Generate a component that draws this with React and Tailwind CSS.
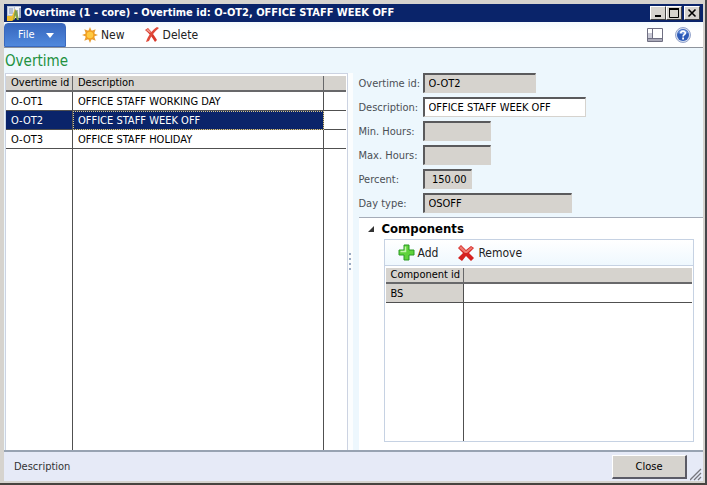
import React from 'react';

const rows = [
  { id: 'O-OT1', description: 'OFFICE STAFF WORKING DAY' },
  { id: 'O-OT2', description: 'OFFICE STAFF WEEK OFF', selected: true },
  { id: 'O-OT3', description: 'OFFICE STAFF HOLIDAY' },
];

const fields = [
  { id: 'overtimeId', label: 'Overtime id:', value: 'O-OT2', look: 'w-[113px] bg-[#d6d3ce]', readOnly: true },
  { id: 'description', label: 'Description:', value: 'OFFICE STAFF WEEK OFF', look: 'w-[163px] bg-white' },
  { id: 'minHours', label: 'Min. Hours:', value: '', look: 'w-[68px] bg-[#d6d3ce]', readOnly: true },
  { id: 'maxHours', label: 'Max. Hours:', value: '', look: 'w-[68px] bg-[#d6d3ce]', readOnly: true },
  { id: 'percent', label: 'Percent:', value: '150.00', look: 'w-[49px] bg-[#d6d3ce] text-right', readOnly: true },
  { id: 'dayType', label: 'Day type:', value: 'OSOFF', look: 'w-[149px] bg-[#d6d3ce]', readOnly: true },
];

function AppIcon() {
  return (
    <svg width="16" height="16" viewBox="0 0 16 16">
      <path d="M1 1h14v12H1z" fill="#b9c3d6" />
      <path d="M2 2h6v8H2z" fill="#e3e8f1" />
      <path d="M3 4h4M3 6h4M3 8h4" stroke="#8695b3" />
      <path d="M9 2h6v11H9z" fill="#f2f4f8" />
      <path d="M11 13V5m3 8V3" stroke="#8b97ad" strokeWidth="1.500" />
      <path d="M1 11h5l3-7 1 1-1 9-3 2H1z" fill="#f0bd2c" />
      <path d="M9 5l2 1 2 9h-2l-2-5-1 5H7z" fill="#7fa04c" />
    </svg>
  );
}

function SunIcon() {
  return (
    <svg width="16" height="16" viewBox="0 0 16 16">
      <path
        d="M8 0l1.600 3.800L13.700 2.300l-1.500 4.100L16 8l-3.800 1.600 1.500 4.100-4.100-1.500L8 16l-1.600-3.800-4.100 1.500 1.500-4.100L0 8l3.800-1.600-1.500-4.100 4.100 1.500z"
        fill="#e8a035"
      />
      <circle cx="8" cy="8" r="4.500" fill="#f39c1c" />
      <circle cx="8" cy="8" r="3.300" fill="#ffc940" />
    </svg>
  );
}

function DeleteIcon() {
  return (
    <svg width="14" height="16" viewBox="0 0 14 16">
      <path d="M0 3l3-2c3 3 6 7 9 12l-2 2C7 10 4 6 0 3z" fill="#d8382b" />
      <path d="M14 1C9 5 6 9 4 14l-3 1C3 9 7 3 12 0z" fill="#e0493a" />
      <path d="M1 3l2-1 3 3-1 1z" fill="#f09a8f" />
    </svg>
  );
}

function PlusIcon() {
  return (
    <svg width="17" height="17" viewBox="0 0 17 17">
      <path d="M6 1h5v5h5v5h-5v5H6v-5H1V6h5z" fill="#5fd33b" stroke="#2b9a24" strokeLinejoin="round" />
      <path d="M7.500 2.500v5h-5" fill="none" stroke="#c4f5ac" strokeWidth="1.500" />
    </svg>
  );
}

function CrossIcon() {
  return (
    <svg width="16" height="16" viewBox="0 0 16 16">
      <path d="M0 3l3-3 5 5 5-4 3 2-5 5 5 5-3 3-5-5-4 5-4-3 5-5z" fill="#d4201f" />
      <path d="M1 3l2-2 5 5 5-4 2 1-6 5H7z" fill="#ee7a70" />
    </svg>
  );
}

function LayoutIcon() {
  return (
    <svg width="16" height="14" viewBox="0 0 16 14">
      <path d="M.5.500h15v13H.500z" fill="#fff" stroke="#6f6f82" />
      <path d="M1 11h14v2H1z" fill="#aaaab9" />
      <path d="M5.500 1v9.500M1 10.500h14" stroke="#6f6f82" fill="none" />
      <path d="M1 5h4v5H1z" fill="#c9c9d5" />
    </svg>
  );
}

function HelpIcon() {
  return (
    <svg width="16" height="16" viewBox="0 0 16 16">
      <circle cx="8" cy="8" r="7.500" fill="#d5def0" stroke="#96a6cc" />
      <circle cx="8" cy="8" r="6" fill="#2d5bb8" />
      <path d="M3 6a5.500 5.500 0 0 1 10 0c-3 1-6 2-10 0z" fill="#6d94dc" />
      <path d="M5.800 6.300c0-3 4.500-2.800 4.500-.3 0 1.700-2.200 1.600-2.200 3.500" fill="none" stroke="#fff" strokeWidth="1.700" />
      <path d="M7.200 10.600h1.800v1.800H7.200z" fill="#fff" />
    </svg>
  );
}

const captionButton =
  'flex h-[14px] w-4 items-center justify-center border border-t-white border-l-white border-r-[#404040] border-b-[#404040] bg-[#d6d3ce]';

function TitleBar() {
  return (
    <header className="flex h-[18px] shrink-0 items-center bg-[#0a246a] pr-[3px] pl-[2px] text-white">
      <AppIcon />
      <h1 className="ml-[2px] flex-1 truncate text-[11px] leading-4 font-bold">
        Overtime (1 - core) - Overtime id: O-OT2, OFFICE STAFF WEEK OFF
      </h1>
      <button type="button" aria-label="Minimize" className={captionButton}>
        <svg width="10" height="10" viewBox="0 0 10 10"><path d="M2 7h6v2H2z" /></svg>
      </button>
      <button type="button" aria-label="Maximize" className={captionButton}>
        <svg width="10" height="10" viewBox="0 0 10 10"><path d="M.5 1h9v8.500h-9z" fill="none" stroke="#000" /><path d="M0 0h10v2H0z" /></svg>
      </button>
      <button type="button" aria-label="Close window" className={captionButton + ' ml-[2px]'}>
        <svg width="10" height="10" viewBox="0 0 10 10"><path d="M1.500 1.500l7 7m0-7l-7 7" stroke="#000" strokeWidth="1.600" /></svg>
      </button>
    </header>
  );
}

function Toolbar() {
  return (
    <nav className="flex h-[26px] shrink-0 items-center border-b border-[#8e949c] bg-linear-to-b from-[#f3fafe] to-white to-40% pr-3 text-[12px] leading-4 text-[#222]">
      <button type="button" className="flex h-6 w-[62px] items-center self-end rounded-t-sm border border-[#3a69bd] bg-linear-to-b from-[#3766bd] to-[#5089dd] pl-[13px] text-[11px] text-white">
        File
        <svg className="ml-3" width="8" height="5" viewBox="0 0 8 5"><path d="M0 0h8L4 5z" fill="#fff" /></svg>
      </button>
      <button type="button" className="ml-4 flex items-center gap-[3px]"><SunIcon />New</button>
      <button type="button" className="ml-5 flex items-center gap-1"><DeleteIcon />Delete</button>
      <button type="button" aria-label="Layout" className="ml-auto"><LayoutIcon /></button>
      <button type="button" aria-label="Help" className="ml-3"><HelpIcon /></button>
    </nav>
  );
}

const headCell = 'h-4 border-b-2 border-[#68686a] bg-[#d6d3ce] p-0 text-left font-normal';

function OvertimeList() {
  return (
    <div className="flex min-h-0 flex-1 border border-b-0 border-[#ccd3e2] bg-white pt-[2px] pr-px">
      <table className="h-full w-full table-fixed border-separate border-spacing-0 text-[11px] leading-[14px]">
        <colgroup>
          <col className="w-[67px]" />
          <col />
          <col className="w-[22px]" />
        </colgroup>
        <thead>
          <tr>
            <th className={headCell + ' border-r pl-[5px] whitespace-nowrap'}>Overtime id</th>
            <th className={headCell + ' border-r pl-[5px]'}>Description</th>
            <th className={headCell} />
          </tr>
        </thead>
        <tbody>
          {rows.map((row) => (
            <tr key={row.id} className={row.selected ? 'bg-[#0a246a] text-white' : ''}>
              <td className="h-[19px] border-r border-b border-[#505050] p-0 pt-px pl-[5px]">{row.id}</td>
              <td className={'h-[19px] border-r border-b border-[#505050] p-0 pt-px pl-[5px]' + (row.selected ? ' outline-1 -outline-offset-1 outline-dotted outline-[#d8c88c]' : '')}>
                {row.description}
              </td>
              <td className="h-[19px] border-b border-[#505050] bg-white p-0" />
            </tr>
          ))}
          <tr className="h-full">
            <td className="border-r border-[#505050] p-0" />
            <td className="border-r border-[#505050] p-0" />
            <td className="p-0" />
          </tr>
        </tbody>
      </table>
    </div>
  );
}

function Components() {
  return (
    <section className="flex min-h-0 flex-1 flex-col border-t border-[#a5acb8] bg-white pr-[9px] pb-[8px] pl-[25px]">
      <h2 className="-ml-4 flex h-[21px] shrink-0 items-center gap-[7px] text-[13px] leading-4 font-bold">
        <svg width="7" height="6" viewBox="0 0 7 6"><path d="M6 0v6H0z" fill="#333" /></svg>
        Components
      </h2>
      <div className="flex min-h-0 flex-1 flex-col border border-[#c6d2e3]">
        <div className="flex h-[26px] shrink-0 items-center border-b border-[#c6d2e3] bg-linear-to-b from-white to-[#eff8fe] pl-[13px] text-[12px] text-[#222]">
          <button type="button" className="flex items-center gap-[3px]"><PlusIcon />Add</button>
          <button type="button" className="ml-5 flex items-center gap-1"><CrossIcon />Remove</button>
        </div>
        <div className="flex min-h-0 flex-1 px-px pt-[2px]">
          <table className="h-full w-full table-fixed border-separate border-spacing-0 text-[11px] leading-[14px]">
            <colgroup>
              <col className="w-[78px]" />
              <col />
            </colgroup>
            <thead>
              <tr>
                <th className={headCell + ' border-r pl-[5px] whitespace-nowrap'}>Component id</th>
                <th className={headCell} />
              </tr>
            </thead>
            <tbody>
              <tr>
                <td className="h-[19px] border-r border-b border-[#505050] bg-[#d6d3ce] p-0 pt-px pl-[5px]">BS</td>
                <td className="h-[19px] border-b border-[#505050] p-0" />
              </tr>
              <tr className="h-full">
                <td className="border-r border-[#505050] p-0" />
                <td className="p-0" />
              </tr>
            </tbody>
          </table>
        </div>
      </div>
    </section>
  );
}

export default function App() {
  return (
    <div className="h-screen border-r-2 border-b-2 border-r-[#47474a] border-b-[#47433f] font-['DejaVu_Sans_Condensed','DejaVu_Sans',sans-serif] text-black">
      <div className="flex h-full flex-col border-t-4 border-r-2 border-b-2 border-l-4 border-[#d6d3ce] bg-[#edf7fd]">
        <TitleBar />
        <Toolbar />
        <main className="flex min-h-0 flex-1">
          <section className="flex min-w-0 flex-[343] flex-col pl-px">
            <h2 className="h-[25px] shrink-0 pt-[3px] text-[15px] leading-5 text-[#22913f]">Overtime</h2>
            <OvertimeList />
          </section>
          <div className="flex w-[11px] shrink-0 flex-col pt-[25px]">
            <div className="flex w-[5px] flex-1 flex-col items-center justify-center gap-[3px] bg-[#fbfdfe]">
              <i className="size-[2px] bg-[#9aaac2]" />
              <i className="size-[2px] bg-[#9aaac2]" />
              <i className="size-[2px] bg-[#9aaac2]" />
              <i className="size-[2px] bg-[#9aaac2]" />
            </div>
          </div>
          <section className="flex min-w-0 flex-[345] flex-col">
            <form className="flex shrink-0 flex-col gap-1 pt-[25px] pb-1 text-[11px] leading-[14px]">
              {fields.map((field) => (
                <div key={field.id} className="flex h-5 items-center">
                  <label htmlFor={field.id} className="w-16 shrink-0 pt-px whitespace-nowrap text-[#4b4f55]">{field.label}</label>
                  <input
                    id={field.id}
                    type="text"
                    defaultValue={field.value}
                    readOnly={field.readOnly}
                    className={'h-5 border-t-2 border-r border-b border-l-2 border-t-[#5a5a5c] border-r-[#d6d3ce] border-b-[#d6d3ce] border-l-[#5a5a5c] px-1 ' + field.look}
                  />
                </div>
              ))}
            </form>
            <Components />
          </section>
        </main>
        <footer className="flex h-[31px] shrink-0 items-center border-t-2 border-[#98a3b2] bg-[#e6eaf7] pl-[10px] text-[11px] leading-[14px] text-[#333]">
          <span className="flex-1">Description</span>
          <button type="button" className="h-6 w-[75px] border border-t-white border-r-2 border-b-2 border-l-white border-r-[#5b5b66] border-b-[#5b5b66] bg-[#d6d3ce] pt-px text-black">Close</button>
          <svg className="mr-px ml-[3px] self-end" width="12" height="13" viewBox="0 0 12 13">
            <path d="M0 12L11 1M4 12l7-7M8 12l3-3" stroke="#77777d" strokeWidth="1.300" />
          </svg>
        </footer>
      </div>
    </div>
  );
}
